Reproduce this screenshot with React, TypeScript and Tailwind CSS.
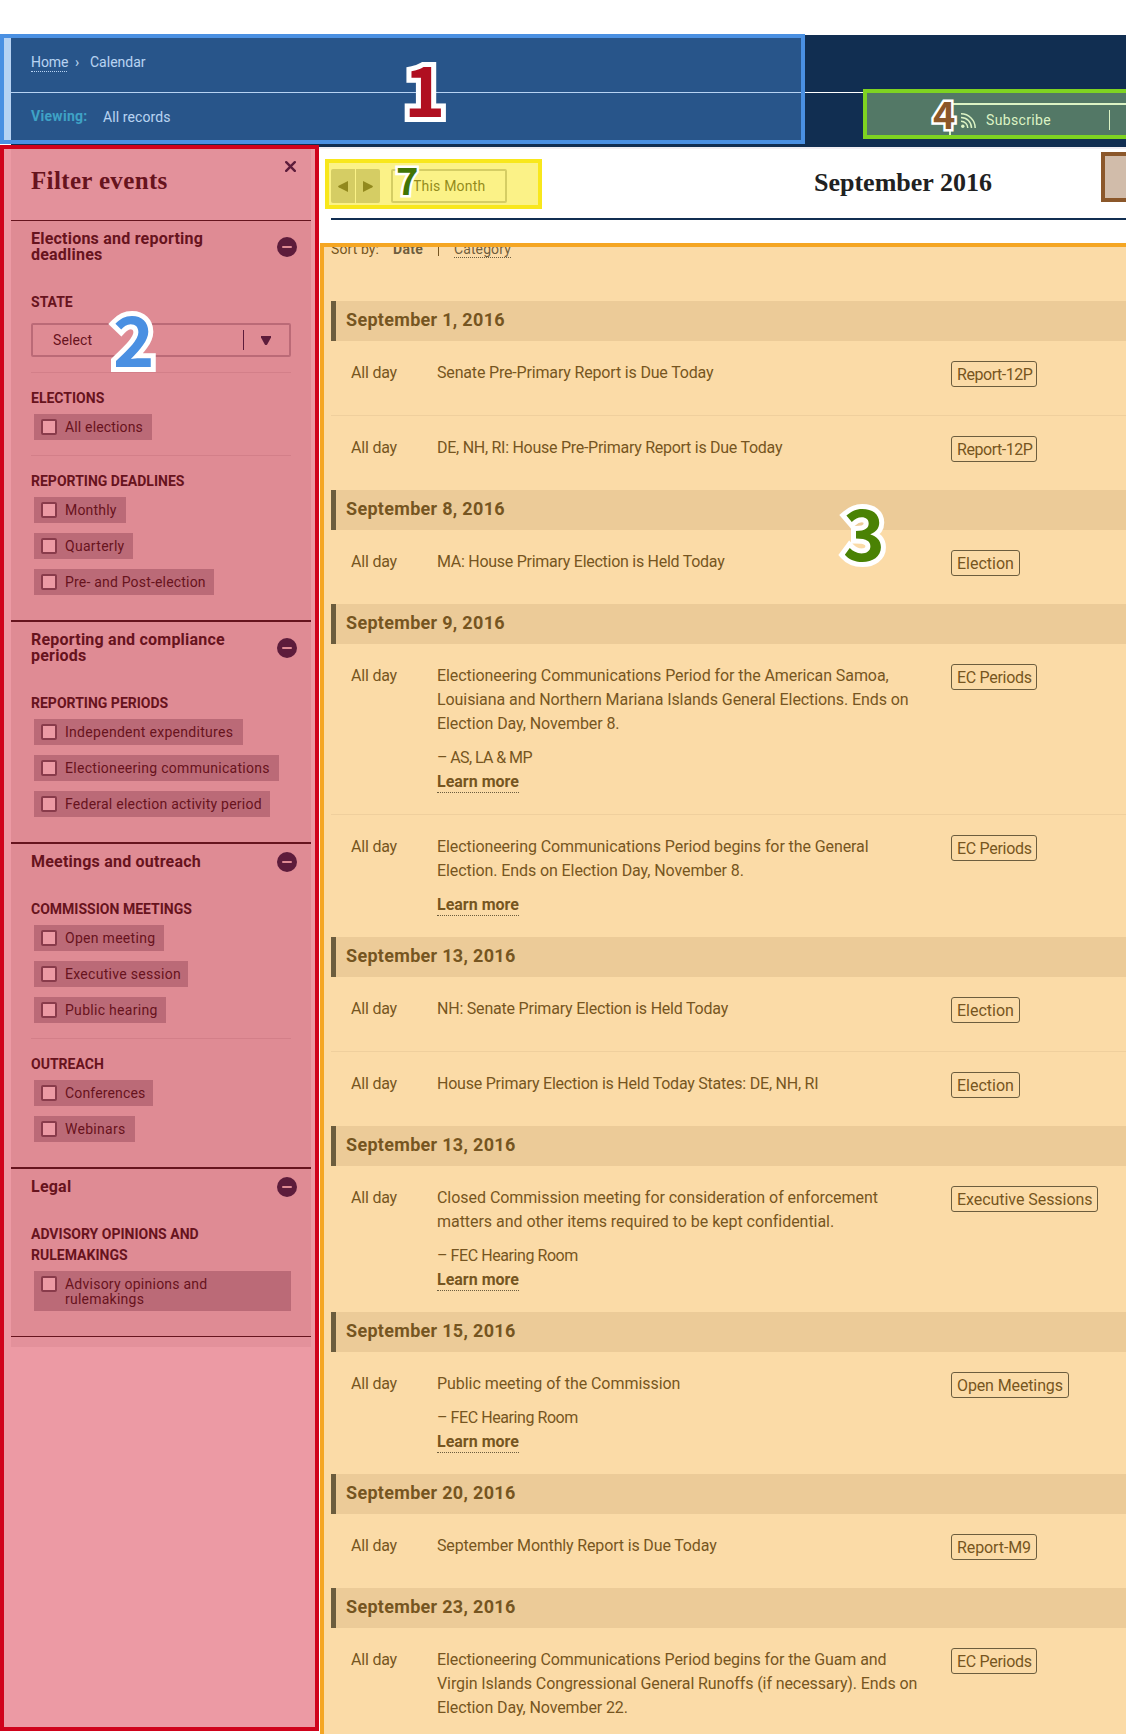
import React from "react";

type Option = { label: string; width: string; tracking?: string };
type Entry = { lines: string; tracking: string; room?: string; roomTracking?: string; more?: boolean; tag: string; tagStyle: string };
type Day = { date: string; entries: Entry[] };

const reportTag = "w-[86px] tracking-[-0.45px]";
const electionTag = "w-[69px]";
const periodTag = "w-[86px] tracking-[-0.3px]";

const days: Day[] = [
  {
    date: "September 1, 2016",
    entries: [
      {
        lines: "Senate Pre-Primary Report is Due Today",
        tracking: "tracking-[-0.17px]",
        tag: "Report-12P",
        tagStyle: reportTag,
      },
      {
        lines: "DE, NH, RI: House Pre-Primary Report is Due Today",
        tracking: "tracking-[-0.27px]",
        tag: "Report-12P",
        tagStyle: reportTag,
      },
    ],
  },
  {
    date: "September 8, 2016",
    entries: [
      {
        lines: "MA: House Primary Election is Held Today",
        tracking: "tracking-[-0.27px]",
        tag: "Election",
        tagStyle: electionTag,
      },
    ],
  },
  {
    date: "September 9, 2016",
    entries: [
      {
        lines:
          "Electioneering Communications Period for the American Samoa,\nLouisiana and Northern Mariana Islands General Elections. Ends on\nElection Day, November 8.",
        tracking: "tracking-[-0.08px]",
        room: "– AS, LA & MP",
        roomTracking: "tracking-[-0.6px]",
        more: true,
        tag: "EC Periods",
        tagStyle: periodTag,
      },
      {
        lines: "Electioneering Communications Period begins for the General\nElection. Ends on Election Day, November 8.",
        tracking: "tracking-[-0.09px]",
        more: true,
        tag: "EC Periods",
        tagStyle: periodTag,
      },
    ],
  },
  {
    date: "September 13, 2016",
    entries: [
      {
        lines: "NH: Senate Primary Election is Held Today",
        tracking: "tracking-[-0.21px]",
        tag: "Election",
        tagStyle: electionTag,
      },
      {
        lines: "House Primary Election is Held Today States: DE, NH, RI",
        tracking: "tracking-[-0.23px]",
        tag: "Election",
        tagStyle: electionTag,
      },
    ],
  },
  {
    date: "September 13, 2016",
    entries: [
      {
        lines:
          "Closed Commission meeting for consideration of enforcement\nmatters and other items required to be kept confidential.",
        tracking: "tracking-[-0.04px]",
        room: "– FEC Hearing Room",
        roomTracking: "tracking-[-0.43px]",
        more: true,
        tag: "Executive Sessions",
        tagStyle: "w-[147px] tracking-[-0.05px]",
      },
    ],
  },
  {
    date: "September 15, 2016",
    entries: [
      {
        lines: "Public meeting of the Commission",
        tracking: "tracking-[-0.05px]",
        room: "– FEC Hearing Room",
        roomTracking: "tracking-[-0.43px]",
        more: true,
        tag: "Open Meetings",
        tagStyle: "w-[118px] tracking-[-0.12px]",
      },
    ],
  },
  {
    date: "September 20, 2016",
    entries: [
      {
        lines: "September Monthly Report is Due Today",
        tracking: "tracking-[-0.15px]",
        tag: "Report-M9",
        tagStyle: "w-[86px] tracking-[-0.1px]",
      },
    ],
  },
  {
    date: "September 23, 2016",
    entries: [
      {
        lines:
          "Electioneering Communications Period begins for the Guam and\nVirgin Islands Congressional General Runoffs (if necessary). Ends on\nElection Day, November 22.",
        tracking: "tracking-[-0.1px]",
        tag: "EC Periods",
        tagStyle: periodTag,
      },
    ],
  },
];

function Section({
  title,
  tall,
  last,
  children,
}: {
  title: string;
  tall?: boolean;
  last?: boolean;
  children: React.ReactNode;
}) {
  return (
    <section
      className={
        last
          ? "border-b border-[#212121] bg-[#e9e6e5] pb-[25px]"
          : "border-b-2 border-[#212121] bg-[#e9e6e5] pb-[25px]"
      }
    >
      <button
        className={
          tall
            ? "flex h-[52px] w-full items-center justify-between pr-[14px] pl-5 text-left"
            : "flex h-9 w-full items-center justify-between pr-[14px] pl-5 text-left"
        }
      >
        <span className="w-[215px] text-[16px] leading-[16px] font-bold tracking-[0.22px] whitespace-pre-line">
          {title}
        </span>
        <span className="flex h-5 w-5 items-center justify-center rounded-full bg-[#112e51]">
          <span className="h-0.5 w-2.5 rounded-full bg-[#e9e6e5]" />
        </span>
      </button>
      <div className="px-5 pt-[19px]">{children}</div>
    </section>
  );
}

function GroupLabel({ children }: { children: React.ReactNode }) {
  return (
    <div className="text-[14px] leading-[21px] font-bold tracking-[0.01px] whitespace-pre-line uppercase">
      {children}
    </div>
  );
}

function Options({ items }: { items: Option[] }) {
  return (
    <div className="mt-[5px] flex flex-col gap-2.5 pl-[3px]">
      {items.map((o) => (
        <label key={o.label} className={`flex bg-[#aeb0b5] py-[5px] pl-[7px] ${o.width}`}>
          <span className="h-4 w-4 shrink-0 rounded-[2px] border-2 border-[#5b616b] bg-white" />
          <span
            className={`ml-2 pt-px text-[14px] leading-[15px] whitespace-pre text-[#212121] ${o.tracking ?? "tracking-[0.29px]"}`}
          >
            {o.label}
          </span>
        </label>
      ))}
    </div>
  );
}

function Divider() {
  return <div className="my-[15px] h-px bg-[#d6d3d3]" />;
}

function Sidebar() {
  return (
    <aside className="ml-[11px] w-[300px] shrink-0 text-[#212121]">
      <div className="flex h-[72px] justify-between border-b border-[#212121] bg-[#f1f1f1] pr-[15px] pl-5">
        <h2 className="pt-4 font-['Liberation_Serif'] text-[25px] leading-8 font-bold tracking-[0.35px]">
          Filter events
        </h2>
        <svg className="mt-3 h-[11px] w-[11px]" viewBox="0 0 11 11" stroke="#112e51" strokeWidth="2.4" strokeLinecap="round">
          <path d="M1.2 1.2 9.8 9.8M9.8 1.2 1.2 9.8" />
        </svg>
      </div>

      <Section title={"Elections and reporting\ndeadlines"} tall>
        <GroupLabel>State</GroupLabel>
        <div className="mt-2.5 flex h-[34px] items-center rounded-[2px] border-2 border-[#aeb0b5] pl-5">
          <span className="flex-1 text-[14px] leading-5 tracking-[0.1px]">Select</span>
          <span className="h-5 w-px bg-[#112e51]" />
          <svg className="mr-[18px] ml-[17px] h-[9px] w-[10px]" viewBox="0 0 10 9" fill="#112e51">
            <path d="M0 0h10v1.5L6.2 8.4Q5 9.4 3.8 8.4L0 1.5Z" />
          </svg>
        </div>
        <Divider />
        <GroupLabel>Elections</GroupLabel>
        <Options items={[{ label: "All elections", width: "w-[118px]", tracking: "tracking-[0.16px]" }]} />
        <Divider />
        <GroupLabel>Reporting deadlines</GroupLabel>
        <Options
          items={[
            { label: "Monthly", width: "w-[92px]", tracking: "tracking-[0.2px]" },
            { label: "Quarterly", width: "w-[99px]", tracking: "tracking-[0.3px]" },
            { label: "Pre- and Post-election", width: "w-[180px]", tracking: "tracking-[0.19px]" },
          ]}
        />
      </Section>

      <Section title={"Reporting and compliance\nperiods"} tall>
        <GroupLabel>Reporting periods</GroupLabel>
        <Options
          items={[
            { label: "Independent expenditures", width: "w-[209px]" },
            { label: "Electioneering communications", width: "w-[245px]" },
            { label: "Federal election activity period", width: "w-[236px]", tracking: "tracking-[0.24px]" },
          ]}
        />
      </Section>

      <Section title="Meetings and outreach">
        <GroupLabel>Commission meetings</GroupLabel>
        <Options
          items={[
            { label: "Open meeting", width: "w-[130px]" },
            { label: "Executive session", width: "w-[154px]" },
            { label: "Public hearing", width: "w-[132px]" },
          ]}
        />
        <Divider />
        <GroupLabel>Outreach</GroupLabel>
        <Options
          items={[
            { label: "Conferences", width: "w-[119px]", tracking: "tracking-[0.15px]" },
            { label: "Webinars", width: "w-[101px]" },
          ]}
        />
      </Section>

      <Section title="Legal" last>
        <GroupLabel>{"Advisory opinions and\nrulemakings"}</GroupLabel>
        <Options
          items={[
            { label: "Advisory opinions and\nrulemakings", width: "w-[257px] h-10", tracking: "tracking-[0.24px]" },
          ]}
        />
      </Section>
      <div className="h-2.5 bg-[#f1f1f1]" />
    </aside>
  );
}

function Toolbar() {
  return (
    <div className="flex h-[71px] items-start border-b-2 border-[#112e51] pt-5">
      <div className="flex h-[34px] gap-px overflow-hidden rounded-[2px]">
        <button className="flex w-6 items-center justify-center bg-[#aeb0b5]">
          <svg className="h-[11px] w-[10px]" viewBox="0 0 10 11" fill="#212121">
            <path d="M10 0v11L.6 6.3Q-.4 5.5.6 4.7Z" />
          </svg>
        </button>
        <button className="flex w-6 items-center justify-center bg-[#aeb0b5] pr-px">
          <svg className="h-[11px] w-[10px]" viewBox="0 0 10 11" fill="#212121">
            <path d="M0 0v11l9.4-4.7q1-.8 0-1.6Z" />
          </svg>
        </button>
      </div>
      <button className="ml-[11px] h-[34px] w-[116px] rounded-[2px] border-2 border-[#aeb0b5] pl-5 text-left text-[14px] tracking-[0.2px] text-[#212121]">
        This Month
      </button>
      <h1 className="mt-[-2px] ml-[307px] font-['Liberation_Serif'] text-[26px] leading-8 font-bold whitespace-nowrap text-[#212121]">
        September 2016
      </h1>
    </div>
  );
}

function EventList() {
  return (
    <div className="text-[#212121]">
      {days.map((d, i) => (
        <section key={i}>
          <h3 className="flex h-10 items-center border-l-[5px] border-[#112e51] bg-[#e6e5e7] pb-1 pl-[10px] text-[18px] font-bold tracking-[0.3px]">
            {d.date}
          </h3>
          {d.entries.map((e, j) => (
            <div
              key={j}
              className={
                j > 0
                  ? "flex border-t border-[#ececee] py-5 pl-5 text-[16px] leading-6"
                  : "flex py-5 pl-5 text-[16px] leading-6"
              }
            >
              <div className="w-[86px] shrink-0 tracking-[-0.2px]">All day</div>
              <div className="w-[514px] shrink-0">
                <p className={`mb-2.5 whitespace-pre ${e.tracking}`}>{e.lines}</p>
                {e.room && <p className={e.roomTracking}>{e.room}</p>}
                {e.more && (
                  <p className="h-6">
                    <a className="inline-block h-[23px] border-b border-dotted border-[#112e51] font-bold">
                      Learn more
                    </a>
                  </p>
                )}
              </div>
              <span
                className={`h-[26px] shrink-0 rounded-[3px] border border-[#112e51] pl-[5px] leading-[25px] whitespace-nowrap ${e.tagStyle}`}
              >
                {e.tag}
              </span>
            </div>
          ))}
        </section>
      ))}
    </div>
  );
}

export default function App() {
  return (
    <div className="relative h-[1734px] w-[1126px] overflow-hidden bg-white font-['Roboto',sans-serif]">
      <header className="mt-[35px] ml-[11px] h-[112px] bg-[#112e51] text-[14px] text-white">
        <nav className="flex h-[58px] items-start border-b border-white pt-[17px] pl-5 leading-5">
          <a className="h-5 w-9 border-b border-dotted border-white tracking-[-0.1px] whitespace-nowrap">Home</a>
          <span className="ml-2 w-[15px]">›</span>
          <span>Calendar</span>
        </nav>
        <div className="flex pt-[13px] pl-5 leading-5">
          <span className="w-[72px] font-bold tracking-[0.3px] text-[#37aeb4]">Viewing:</span>
          <span className="pt-px tracking-[0.1px]">All records</span>
        </div>
      </header>
      <div className="h-0.5 bg-[#f1eff3]" />

      <div className="flex">
        <Sidebar />
        <main className="ml-5 min-w-0 flex-1">
          <Toolbar />
          <div className="flex h-[81px] pt-[19px] text-[14px] leading-5 tracking-[0.1px] text-[#212121]">
            <span className="w-[62px]">Sort by:</span>
            <span className="w-[45px] font-bold tracking-[0.3px] text-[#112e51]">Date</span>
            <span className="mt-[5px] mr-[15px] h-3 w-px bg-[#212121]" />
            <a className="h-[19px] border-b border-dotted border-[#112e51] text-[#112e51]">Category</a>
          </div>
          <EventList />
        </main>
      </div>

      {/* Highlighted regions */}
      <div className="absolute top-[34px] left-0 h-[110px] w-[805px] border-4 border-[#4a90e2] bg-[#4a90e2]/40" />
      <div className="absolute top-[145px] left-0 h-[1586px] w-[319px] border-4 border-[#d0021b] bg-[#d0021b]/40" />
      <div className="absolute top-[243px] left-[320px] h-[1500px] w-[820px] border-4 border-[#f5a623] bg-[#f5a623]/40" />
      <div className="absolute top-[159px] left-[325px] h-[50px] w-[217px] border-4 border-[#f8e71c] bg-[#f8e71c]/53" />
      <div className="absolute top-[152px] left-[1101px] h-[50px] w-[60px] border-4 border-[#8b572a] bg-[#8b572a]/40" />
      <div className="absolute top-[89px] left-[863px] flex h-[50px] w-[280px] border-4 border-[#7ed321] bg-[#537866] pt-[10px] pl-[82px]">
        <div className="flex w-[200px] shrink-0 border-t-2 border-l-2 border-[#dcf3c4] pt-[5px] pl-[10px]">
          <svg className="mt-[3px] h-[15px] w-[15px]" viewBox="0 0 15 15" fill="none" stroke="#dcf3c4" strokeWidth="1.5">
            <circle cx="1.8" cy="13.2" r="1.7" fill="#dcf3c4" stroke="none" />
            <path d="M0 8.2A6.8 6.8 0 0 1 6.8 15M0 4.5A10.5 10.5 0 0 1 10.5 15M0 .8A14.2 14.2 0 0 1 14.2 15" />
          </svg>
          <span className="ml-[10px] w-[123px] text-[14px] leading-5 tracking-[0.35px] text-[#dcf3c4]">Subscribe</span>
          <span className="h-5 w-px bg-[#dcf3c4]" />
        </div>
      </div>

      {/* Region numbers */}
      <div className="font-['Noto_Sans_CJK_JP'] leading-none font-bold [paint-order:stroke_fill]">
        <span className="absolute top-[52px] left-[404px] text-[70px] text-[#b00f20] [-webkit-text-stroke:10px_white]">1</span>
        <span className="absolute top-[302px] left-[113px] text-[70px] text-[#4a90e2] [-webkit-text-stroke:10px_white]">2</span>
        <span className="absolute top-[495px] left-[843px] text-[71px] text-[#4a8204] [-webkit-text-stroke:10px_white]">3</span>
        <span className="absolute top-[94px] left-[933px] text-[38px] text-[#8b572a] [-webkit-text-stroke:5px_white]">4</span>
        <span className="absolute top-[160px] left-[396px] text-[38px] text-[#417505] [-webkit-text-stroke:5px_white]">7</span>
      </div>
    </div>
  );
}
